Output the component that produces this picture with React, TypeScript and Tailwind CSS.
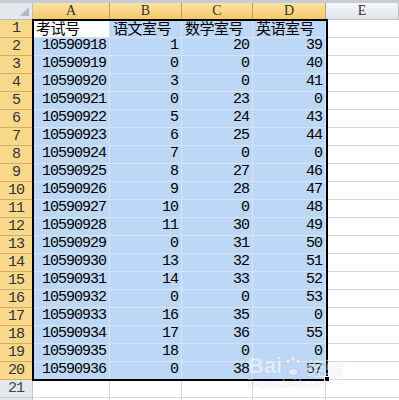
import React from "react";

const data: [string, string, string, string][] = [
  ["考试号", "语文室号", "数学室号", "英语室号"],
  ["10590918", "1", "20", "39"],
  ["10590919", "0", "0", "40"],
  ["10590920", "3", "0", "41"],
  ["10590921", "0", "23", "0"],
  ["10590922", "5", "24", "43"],
  ["10590923", "6", "25", "44"],
  ["10590924", "7", "0", "0"],
  ["10590925", "8", "27", "46"],
  ["10590926", "9", "28", "47"],
  ["10590927", "10", "0", "48"],
  ["10590928", "11", "30", "49"],
  ["10590929", "0", "31", "50"],
  ["10590930", "13", "32", "51"],
  ["10590931", "14", "33", "52"],
  ["10590932", "0", "0", "53"],
  ["10590933", "16", "35", "0"],
  ["10590934", "17", "36", "55"],
  ["10590935", "18", "0", "0"],
  ["10590936", "0", "38", "57"],
];

const cols = "grid grid-cols-[33px_77px_72px_71px_73px_1fr]";
const num = "font-['Liberation_Mono','Noto_Sans_CJK_SC',monospace] text-[15px] tracking-[-1px]";

function ColHead({ label, active }: { label: string; active: boolean }) {
  return (
    <div
      className={
        "h-[17px] flex items-center justify-center border-r border-b text-[14px] leading-none " +
        (active
          ? "bg-gradient-to-b from-[#fbe3a3] to-[#f5c866] border-[#c9a24e] text-[#333]"
          : "bg-gradient-to-b from-[#f6f7f9] to-[#e1e4e9] border-[#bfc4cc] text-[#333]")
      }
    >
      <span className="font-['Liberation_Serif',serif]">{label}</span>
    </div>
  );
}

function RowHead({ n, active }: { n?: number; active: boolean }) {
  return (
    <div
      className={
        "h-[18px] flex items-center justify-center border-r border-b text-[15px] leading-none " +
        num +
        (active
          ? " bg-[#f8d98c] border-[#d6b062] text-[#333]"
          : " bg-[#e4e7ec] border-[#c3c8cf] text-[#444]")
      }
    >
      {n}
    </div>
  );
}

export default function App() {
  return (
    <div className="relative w-[399px] h-[400px] overflow-hidden bg-white">
      <div className="h-[3px] bg-[#c9cdd3]" />
      <div className={cols}>
        <div className="relative h-[17px] bg-[#e4e7ec] border-r border-b border-[#b9bec6]">
          <svg className="absolute right-[3px] bottom-[3px]" width="9" height="9" viewBox="0 0 9 9">
            <path d="M9 0 L9 9 L0 9 Z" fill="#b4b9c1" />
          </svg>
        </div>
        <ColHead label="A" active />
        <ColHead label="B" active />
        <ColHead label="C" active />
        <ColHead label="D" active />
        <ColHead label="E" active={false} />
      </div>

      {data.map((row, i) => (
        <div key={i} className={cols}>
          <RowHead n={i + 1} active />
          {row.map((v, j) => {
            const isActive = i === 0 && j === 0;
            const right = i > 0;
            return (
              <div
                key={j}
                className={
                  "h-[18px] flex items-center border-r border-b overflow-visible whitespace-nowrap px-[3px] " +
                  (isActive ? "bg-white border-[#d9dee6] " : "bg-[#bdd7f6] border-[#d5e3f5] ") +
                  (right ? "justify-end " + num : "justify-start pl-[3px] font-['Noto_Sans_CJK_SC',sans-serif] text-[15px] tracking-[-0.5px]")
                }
              >
                {v}
              </div>
            );
          })}
          <div className="h-[18px] border-b border-[#d4d8df]" />
        </div>
      ))}

      {[21, 0].map((n) => (
        <div key={n} className={cols}>
          <RowHead n={n || undefined} active={false} />
          <div className="h-[18px] border-r border-b border-[#d4d8df]" />
          <div className="h-[18px] border-r border-b border-[#d4d8df]" />
          <div className="h-[18px] border-r border-b border-[#d4d8df]" />
          <div className="h-[18px] border-r border-b border-[#d4d8df]" />
          <div className="h-[18px] border-b border-[#d4d8df]" />
        </div>
      ))}

      {/* selection outline */}
      <div className="absolute left-[32px] top-[19px] w-[296px] h-[362px] border-[2px] border-black pointer-events-none" />
      <div className="absolute left-[324px] top-[376px] w-[6px] h-[6px] bg-black border border-white pointer-events-none" />

      {/* watermark */}
      <div className="absolute left-[248px] top-[355px] pointer-events-none opacity-50">
        <div className="flex items-end gap-[2px] text-white font-['Liberation_Sans',sans-serif] font-bold text-[22px] leading-none [text-shadow:0_0_1px_#9aa]">
          <span>Bai</span>
          <svg width="18" height="22" viewBox="0 0 18 22">
            <g fill="#fff" stroke="#a8b0b8" strokeWidth="0.8">
              <ellipse cx="4" cy="6" rx="2.3" ry="3" />
              <ellipse cx="9" cy="3.5" rx="2.3" ry="3" />
              <ellipse cx="14" cy="6" rx="2.3" ry="3" />
              <path d="M4 18 C4 12 14 12 14 18 C14 21 4 21 4 18 Z" />
            </g>
          </svg>
          <span className="font-['Noto_Sans_CJK_SC',sans-serif] font-normal text-[19px] ml-[2px]">经验</span>
        </div>
        <div className="text-[10px] leading-none mt-[2px] text-white font-['Liberation_Sans',sans-serif] [text-shadow:0_0_1px_#99a]">
          jingyan.baidu.com
        </div>
      </div>
    </div>
  );
}
